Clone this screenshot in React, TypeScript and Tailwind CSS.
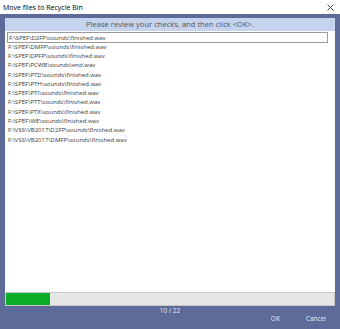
import React from "react";

const files = [
  "F:\\SPEF\\D2FP\\sounds\\finished.wav",
  "F:\\SPEF\\DMFP\\sounds\\finished.wav",
  "F:\\SPEF\\DPFP\\sounds\\finished.wav",
  "F:\\SPEF\\PCWB\\sounds\\end.wav",
  "F:\\SPEF\\PTD\\sounds\\finished.wav",
  "F:\\SPEF\\PTH\\sounds\\finished.wav",
  "F:\\SPEF\\PTI\\sounds\\finished.wav",
  "F:\\SPEF\\PTT\\sounds\\finished.wav",
  "F:\\SPEF\\PTX\\sounds\\finished.wav",
  "F:\\SPEF\\WE\\sounds\\finished.wav",
  "F:\\VSS\\VB2017\\D2FP\\sounds\\finished.wav",
  "F:\\VSS\\VB2017\\DMFP\\sounds\\finished.wav",
];

export default function App() {
  return (
    <div
      className="w-[340px] h-[329px] flex flex-col bg-[#5e6a98] overflow-hidden"
      style={{ fontFamily: "'Open Sans', 'Noto Sans', sans-serif" }}
    >
      <div className="h-[14px] bg-white flex items-center justify-between pl-[3px] pr-[6px] shrink-0">
        <span className="text-[7px] leading-none text-black">Move files to Recycle Bin</span>
        <svg width="7" height="7" viewBox="0 0 7 7">
          <path d="M0.5 0.5L6.5 6.5M6.5 0.5L0.5 6.5" stroke="#333" strokeWidth="0.9" />
        </svg>
      </div>
      <div className="flex-1 flex flex-col px-[5px] pt-[4px]">
        <div className="h-[13px] bg-[#c6d3ee] flex items-center justify-center shrink-0">
          <span className="text-[7.6px] leading-none text-[#555]">
            Please review your checks, and then click &lt;OK&gt;.
          </span>
        </div>
        <div className="h-[261px] bg-white pt-[1px] pl-[2px] pr-[7px] shrink-0">
          {files.map((f, i) => (
            <div
              key={i}
              className={
                "h-[9.3px] flex items-center pl-[1px] text-[6px] leading-none text-[#3a3a3a] " +
                (i === 0 ? "border border-[#9a9a9a] h-[11px] mb-[-1px]" : "")
              }
            >
              {f}
            </div>
          ))}
        </div>
        <div className="h-[14px] bg-[#e6e6e6] border border-[#c8c8c8] shrink-0">
          <div className="h-full w-[44px] bg-[#0aad25]" />
        </div>
        <div className="flex justify-center pt-[2px]">
          <span className="text-[6.5px] leading-none text-[#e8ebf5]">10 / 22</span>
        </div>
        <div className="flex justify-end items-center gap-[26px] pr-[9px] pt-[1px]">
          <span className="text-[6.5px] leading-none text-[#e8ebf5]">OK</span>
          <span className="text-[6.5px] leading-none text-[#e8ebf5]">Cancel</span>
        </div>
      </div>
    </div>
  );
}
